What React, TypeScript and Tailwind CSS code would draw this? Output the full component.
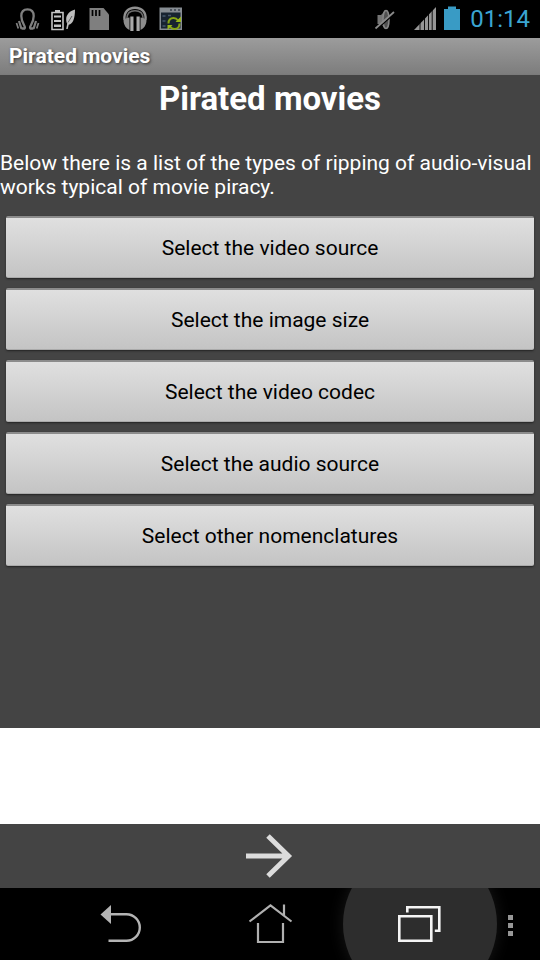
import React from 'react';

const OPTIONS = [
  'Select the video source',
  'Select the image size',
  'Select the video codec',
  'Select the audio source',
  'Select other nomenclatures',
];

const StatusBar: React.FC = () => (
  <header className="flex h-[38px] shrink-0 items-center justify-between bg-black pl-3.5 pr-2.5">
    <div className="flex items-center gap-2.5">
      {/* Headset */}
      <svg className="h-[26px] w-[26px]" viewBox="0 0 26 26" fill="none" stroke="#7f7f7f" aria-hidden="true">
        <path d="M7.500 22.500h3c.8-.8.400-1.800-.3-3C8.500 16.500 7.300 14 7.300 10c0-4.500 2.500-6.700 6.200-6.700S19.700 5.500 19.700 10c0 4-1.200 6.500-2.900 9.500-.7 1.200-1.100 2.200-.3 3h3" strokeWidth="2.300" />
        <path d="M5 15l2.500 8M22 15l-2.500 8" strokeWidth="2.200" />
        <path d="M2.500 17l1.800 5.500M24.500 17l-1.800 5.500" strokeWidth="1.700" />
      </svg>
      {/* Battery saver */}
      <svg className="h-[26px] w-[26px]" viewBox="0 0 26 26" aria-hidden="true">
        <path d="M2 6.500h11v17H2z" fill="none" stroke="#c4c4c4" strokeWidth="1.600" />
        <path d="M5 4h5v2H5zM4 9.500h7v2H4zM4 14h7v2H4zM4 18.500h7v2.500H4z" fill="#c4c4c4" />
        <path d="M25 3.500c-5.500 1.500-8.800 5.500-8.800 9.500 0 2 .3 3.500 1 4.500l-1 5.500h1.500l1-4.300c4.300-.7 6.300-6.200 6.300-15.200z" fill="#bdbdbd" />
        <path d="M22 10l-4 6.500" stroke="#444" strokeWidth="0.800" />
      </svg>
      {/* SD card */}
      <svg className="h-[26px] w-[26px]" viewBox="0 0 26 26" aria-hidden="true">
        <path d="M3.500 2h14L23 8.500V24H3.500z" fill="#7f7f7f" />
        <path d="M6.500 4v6M10 4v6M13.500 4v6" stroke="#000" strokeWidth="1.700" />
      </svg>
      {/* Headphones */}
      <svg className="h-[26px] w-[26px]" viewBox="0 0 26 26" aria-hidden="true">
        <path d="M2.500 14C1.500 6 6.500 1.700 13 1.700S24.500 6 23.500 14" fill="none" stroke="#909090" strokeWidth="2.400" />
        <path d="M4.800 12.500C5 7.500 8.300 4.800 13 4.800s8 2.700 8.200 7.700" fill="none" stroke="#6c6c6c" strokeWidth="1.400" />
        <path d="M7.500 11.500V24C4 22.500 1.800 19 1.500 14.500c1.500-2 3.500-3 6-3zM18.500 11.500V24c3.500-1.500 5.700-5 6-9.500-1.500-2-3.500-3-6-3z" fill="#8c8c8c" />
        <path d="M8.300 10.500h3.200V25H8.300zM14.500 10.500h3.200V25h-3.200z" fill="#a8a8a8" />
      </svg>
      {/* App sync */}
      <svg className="h-[26px] w-[26px]" viewBox="0 0 26 26" aria-hidden="true">
        <path d="M1.500 1.500h22.500v22.500H1.500z" fill="#868c92" />
        <path d="M3 6.500h19.500v16H3z" fill="#172330" />
        <path d="M12 4h2M16 4h2M20 4h2" stroke="#4b535d" strokeWidth="2" />
        <path d="M4.500 10h3M4.500 15h3M4.500 20h3M10 9.500h3" stroke="#46586c" strokeWidth="1.500" />
        <path d="M10.500 17.500c0-3.500 2-5.500 5-5.500 2 0 3.500 1 4.500 2.500M21.500 17.500c0 3.500-2 5.500-5 5.500-2 0-3.500-1-4.500-2.500" fill="none" stroke="#86a514" strokeWidth="2" />
        <path d="M17.500 16H23v-5.500zM14.500 19H9.500v5z" fill="#98b818" />
      </svg>
    </div>
    <div className="flex items-center">
      {/* Muted speaker */}
      <svg className="mr-4 h-[26px] w-[26px]" viewBox="0 0 26 26" aria-hidden="true">
        <path d="M5.500 9h3.500l4-4v17l-4-4H5.500z" fill="#747474" />
        <ellipse cx="14" cy="13.500" rx="3" ry="9" fill="#505050" stroke="#858585" strokeWidth="1.500" />
        <path d="M4.500 23.500L23.500 6.500" stroke="#000" strokeWidth="1.500" />
        <path d="M3.500 22.500L22 6" stroke="#8a8a8a" strokeWidth="1.700" />
      </svg>
      {/* Signal */}
      <svg className="mr-2 h-[26px] w-[22px]" viewBox="0 0 22 26" aria-hidden="true">
        <path d="M0 24L22 1v23z" fill="#969696" />
        <path d="M6 12v12M10.500 8v16M14.500 4v20M18.200 1v23" stroke="#000" strokeWidth="0.900" />
      </svg>
      {/* Battery */}
      <svg className="mr-2.5 h-[26px] w-4" viewBox="0 0 16 26" fill="#399bc5" aria-hidden="true">
        <path d="M4 .5h8V3h4v21H0V3h4z" />
      </svg>
      <time className="text-2xl leading-6 text-[#3aa5d2]">01:14</time>
    </div>
  </header>
);

const NavBar: React.FC = () => (
  <nav className="grid h-[72px] shrink-0 grid-cols-[45fr_150fr_150fr_150fr_45fr] overflow-hidden bg-black">
    <button type="button" aria-label="Back" className="col-start-2 flex items-center justify-center">
      <svg className="h-12 w-12" viewBox="0 0 48 48" fill="none">
        <path d="M13 14.200h17.500a13.300 13.300 0 0 1 0 26.600H12.500" stroke="#b4b4b4" strokeWidth="2.400" />
        <path d="M4.500 14.500L15 5v19z" fill="#b4b4b4" />
      </svg>
    </button>
    <button type="button" aria-label="Home" className="flex items-center justify-center">
      <svg className="h-12 w-12" viewBox="0 0 48 48" fill="none" stroke="#b0b0b0" strokeWidth="2.200">
        <path d="M3.500 21.500L24.500 5.500l21 16M38 15.500V4.500M12 23v19h25V23" />
      </svg>
    </button>
    <button type="button" aria-label="Recent apps" className="relative flex items-center justify-center">
      <span className="absolute left-1/2 top-1/2 size-[154px] -translate-x-1/2 -translate-y-1/2 rounded-full bg-[#2d2d2d] shadow-[0_0_16px_#181818]" />
      <svg className="relative h-12 w-12" viewBox="0 0 48 48" fill="none" stroke="#f4f4f4" strokeWidth="2.600">
        <path d="M3.300 16.200h32v24.500h-32z" />
        <path d="M11.300 12.500V7.300h32v23.500h-4.500" />
      </svg>
    </button>
    <button type="button" aria-label="Menu" className="flex items-center justify-start pl-3">
      <svg className="h-6 w-2" viewBox="0 0 8 24" fill="#9c9c9c">
        <path d="M1 3h5v5H1zM1 11h5v5H1zM1 19h5v5H1z" />
      </svg>
    </button>
  </nav>
);

const App: React.FC = () => {
  return (
    <div className="flex min-h-screen flex-col bg-[#444444] font-['Roboto',sans-serif]">
      <StatusBar />
      <div className="flex h-[37px] shrink-0 items-center border-b border-[#7b7b7b] bg-gradient-to-b from-[#9c9c9c] to-[#7d7d7d] px-[9px]">
        <span className="text-[21px] font-bold leading-6 text-white [text-shadow:1px_1px_3px_#333]">Pirated movies</span>
      </div>

      <main className="flex-1 text-white">
        <h1 className="pt-1 text-center text-[33px] font-bold leading-10">Pirated movies</h1>
        <p className="mt-8 text-[21px] leading-6">
          Below there is a list of the types of ripping of audio-visual works typical of movie piracy.
        </p>
        <div className="mt-[17px] flex flex-col gap-[10px] px-1.5">
          {OPTIONS.map((label) => (
            <button
              key={label}
              type="button"
              className="h-[62px] w-full rounded-xs border-b border-t-2 border-b-[#aaaaaa] border-t-[#8c8c8c] bg-gradient-to-b from-[#e0e0e0] to-[#c4c4c4] text-[21px] leading-6 text-black shadow-[0_1px_2px_#222]"
            >
              {label}
            </button>
          ))}
        </div>
      </main>

      <div className="h-24 shrink-0 bg-white" />
      <div className="flex h-16 shrink-0 items-center justify-center">
        <button type="button" aria-label="Next">
          <svg className="h-12 w-12" viewBox="0 0 48 48" fill="none" stroke="#dcdcdc" strokeWidth="5">
            <path d="M0 24h43M22 4l20.500 20L22 44" />
          </svg>
        </button>
      </div>
      <NavBar />
    </div>
  );
};

export default App;
